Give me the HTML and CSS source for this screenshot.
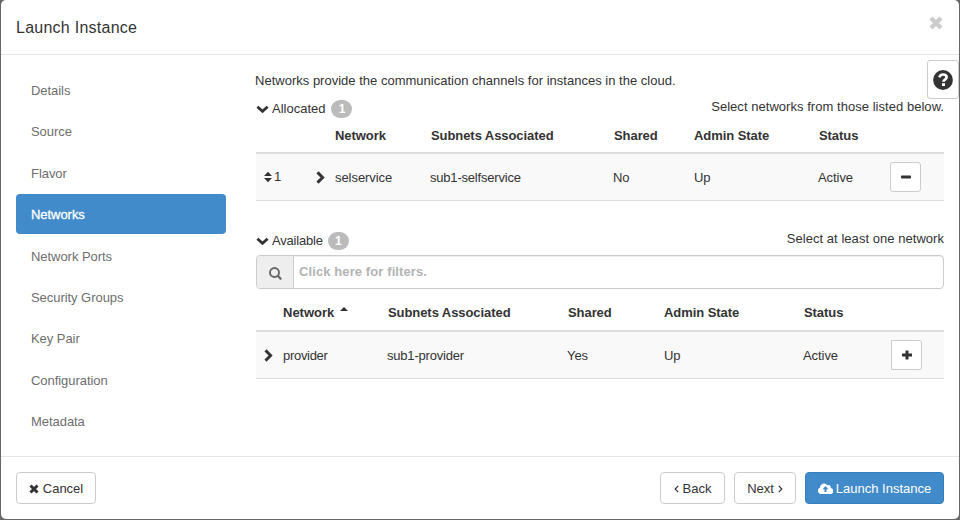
FILE: index.html
```html
<!DOCTYPE html>
<html lang="en">
<head>
<meta charset="utf-8">
<title>Launch Instance</title>
<link rel="stylesheet" href="styles.css">
</head>
<body>
<div class="modal">
  <header class="modal-header">
    <h1>Launch Instance</h1>
    <button class="close" aria-label="Close"><svg width="14" height="14" viewBox="0 0 14 14"><path d="M2 2 12 12M12 2 2 12" stroke="currentColor" stroke-width="4.4"/></svg></button>
  </header>
  <div class="modal-body">
    <nav class="steps">
      <a>Details</a><a>Source</a><a>Flavor</a><a class="active">Networks</a><a>Network Ports</a><a>Security Groups</a><a>Key Pair</a><a>Configuration</a><a>Metadata</a>
    </nav>
    <main class="content">
      <p class="intro">Networks provide the communication channels for instances in the cloud.</p>
      <section class="allocated">
        <div class="bar">
          <div class="label"><svg width="13" height="9" viewBox="0 0 13 9"><path d="M1.4 1.8 6.5 6.4 11.6 1.8" fill="none" stroke="currentColor" stroke-width="2.8"/></svg><span>Allocated</span><b class="badge">1</b></div>
          <span class="hint">Select networks from those listed below.</span>
        </div>
        <div class="row head"><span></span><span></span><span>Network</span><span>Subnets Associated</span><span>Shared</span><span>Admin State</span><span>Status</span><span></span></div>
        <div class="row item">
          <span class="order"><svg width="8" height="12" viewBox="0 0 8 12"><path d="M0 5 4 .8 8 5zM0 7H8L4 11.2z" fill="currentColor"/></svg>1</span>
          <svg width="9" height="13" viewBox="0 0 9 13"><path d="M1.5 1.4 6.6 6.5 1.5 11.6" fill="none" stroke="currentColor" stroke-width="2.9"/></svg>
          <span>selservice</span><span class="subnet">sub1-selfservice</span><span class="value">No</span><span>Up</span><span class="value">Active</span>
          <button class="square" aria-label="Remove"><svg width="10" height="10" viewBox="0 0 10 10"><rect y="3.5" width="10" height="3" rx=".7" fill="currentColor"/></svg></button>
        </div>
      </section>
      <section class="available">
        <div class="bar">
          <div class="label"><svg width="13" height="9" viewBox="0 0 13 9"><path d="M1.4 1.8 6.5 6.4 11.6 1.8" fill="none" stroke="currentColor" stroke-width="2.8"/></svg><span>Available</span><b class="badge">1</b></div>
          <span class="hint">Select at least one network</span>
        </div>
        <div class="search">
          <span class="addon"><svg width="13" height="13" viewBox="0 0 13 13"><circle cx="5.5" cy="5.5" r="4.5" fill="none" stroke="currentColor" stroke-width="1.9"/><path d="M8.6 8.6 12.3 12.3" stroke="currentColor" stroke-width="2.2"/></svg></span>
          <span class="placeholder">Click here for filters.</span>
        </div>
        <div class="row head"><span></span><span class="sorted">Network<svg width="8" height="4" viewBox="0 0 8 4"><path d="M0 4 4 0 8 4z" fill="currentColor"/></svg></span><span>Subnets Associated</span><span>Shared</span><span>Admin State</span><span>Status</span><span></span></div>
        <div class="row item">
          <svg width="9" height="13" viewBox="0 0 9 13"><path d="M1.5 1.4 6.6 6.5 1.5 11.6" fill="none" stroke="currentColor" stroke-width="2.9"/></svg>
          <span class="name">provider</span><span class="subnet">sub1-provider</span><span class="value">Yes</span><span>Up</span><span class="value">Active</span>
          <button class="square joined" aria-label="Add"><svg width="10" height="10" viewBox="0 0 10 10"><path d="M0 3.5H3.5V.5H6.5V3.5H10V6.5H6.5V9.5H3.5V6.5H0z" fill="currentColor"/></svg></button>
        </div>
      </section>
    </main>
  </div>
  <footer class="modal-footer">
    <button class="btn cancel"><svg width="10" height="10" viewBox="0 0 10 10"><path d="M1.5 1.5 8.5 8.5M8.5 1.5 1.5 8.5" stroke="currentColor" stroke-width="3"/></svg><span>Cancel</span></button>
    <button class="btn back"><svg width="5" height="8" viewBox="0 0 5 8"><path d="M4.2 .8 1.2 4 4.2 7.2" fill="none" stroke="currentColor" stroke-width="1.2"/></svg><span>Back</span></button>
    <button class="btn next"><span>Next</span><svg width="5" height="8" viewBox="0 0 5 8"><path d="M.8 .8 3.8 4 .8 7.2" fill="none" stroke="currentColor" stroke-width="1.2"/></svg></button>
    <button class="btn primary"><svg width="15" height="11" viewBox="0 0 15 11"><path fill="currentColor" fill-rule="evenodd" d="M3.3 11A3.2 3.2 0 0 1 2 4.8 4.1 4.1 0 0 1 9.4 2.2 2.3 2.3 0 0 1 12.6 5 3 3 0 0 1 11.9 11zM7.5 3.1 4.5 6.2H6.5V9H8.5V6.2H10.5z"/></svg><span>Launch Instance</span></button>
  </footer>
  <button class="help" aria-label="Help"><svg width="20" height="20" viewBox="0 0 20 20"><circle cx="10" cy="10" r="9.9" fill="currentColor"/><path d="M6.4 7.4C6.9 5.2 8.2 4.5 10 4.5c2.2 0 3.6 1.1 3.6 2.8 0 2.4-3 2.3-3.1 4.5" fill="none" stroke="#fff" stroke-width="2.7"/><rect x="9" y="13.2" width="3" height="2.8" fill="#fff"/></svg></button>
</div>
</body>
</html>
```
FILE: styles.css
```css
* { box-sizing: border-box; }
body {
  margin: 0;
  height: 520px;
  padding: 0 1px 1px;
  background: #666;
  color: #333;
  font: 13px/18px "Liberation Sans", Arial, sans-serif;
  overflow: hidden;
}
button { font: inherit; letter-spacing: inherit; color: inherit; padding: 0; }
svg { display: block; flex: none; }
.modal {
  position: relative;
  display: flex;
  flex-direction: column;
  height: 519px;
  background: #fff;
  border-radius: 5px;
}
.modal-header {
  height: 55px;
  flex: none;
  display: flex;
  justify-content: space-between;
  align-items: flex-start;
  padding: 16px 16px 0 15px;
  border-bottom: 1px solid #e5e5e5;
}
h1 { margin: 0; font-size: 16px; line-height: 23px; font-weight: 400; letter-spacing: .25px; }
.close { border: 0; background: none; color: #ccc; }
.modal-body { flex: 1; display: flex; min-height: 0; }
.steps { width: 239px; padding: 15px 14px 0 15px; display: flex; flex-direction: column; gap: 2px; flex: none; }
.steps a { height: 39.4px; line-height: 39.2px; padding: 1px 0 0 15px; border-radius: 4px; color: #6e6e6e; flex: none; letter-spacing: -.05px; }
.steps .active { background: #428bca; color: #fff; -webkit-text-stroke: .3px #fff; }
.content { width: 704px; padding: 17px 0 0 16px; }
.intro { margin: 0 0 0 -1px; letter-spacing: .01px; }
.bar { display: flex; justify-content: space-between; }
.label { display: flex; align-items: center; height: 18px; }
.label span { margin-left: 3px; }
.badge {
  width: 21px;
  height: 18px;
  margin-left: 5px;
  border-radius: 9px;
  background: #bbb;
  color: #fff;
  font-size: 12px;
  text-align: center;
}
.allocated .badge { margin-left: 6px; }
.available .label span { letter-spacing: -.2px; }
.allocated .bar { height: 26px; padding-top: 10px; }
.hint { margin-top: -2px; letter-spacing: .04px; }
.available { padding-top: 31px; }
.row { display: grid; align-items: center; }
.allocated .row { grid-template-columns: 59px 20px 96px 183px 80px 125px 71px 1fr; }
.available .row { grid-template-columns: 27px 105px 180px 96px 140px 87px 1fr; }
.head { border-bottom: 2px solid #ddd; font-weight: 700; letter-spacing: -.07px; }
.allocated .head { height: 38px; padding-top: 4px; }
.available .head { height: 43px; padding-top: 6px; }
.item { height: 47px; background: #f9f9f9; border-bottom: 1px solid #ddd; letter-spacing: -.06px; }
.item > span { padding-top: 1px; }
.item .name { letter-spacing: -.3px; }
.item .subnet { margin-left: -1px; letter-spacing: -.2px; }
.item .value { margin-left: -1px; }
.item .order { display: flex; align-items: center; gap: 2px; padding: 0 0 0 8px; }
.item > svg { margin-left: 1px; }
.available .item > svg { margin-left: 8px; }
.square {
  width: 31px;
  height: 30px;
  display: grid;
  place-items: center;
  border: 1px solid #ccc;
  border-radius: 3px;
  background: #fff;
}
.joined { border-radius: 0 3px 3px 0; }
.search {
  height: 34px;
  margin-top: 5px;
  display: flex;
  align-items: center;
  border: 1px solid #ccc;
  border-radius: 4px;
  box-shadow: inset 0 1px 1px rgba(0, 0, 0, .075);
}
.addon { width: 37px; height: 32px; padding-top: 2px; display: grid; place-items: center; background: #eee; border-right: 1px solid #ccc; border-radius: 3px 0 0 3px; color: #666; }
.placeholder { padding-left: 5px; color: #b3b3b3; font-weight: 700; letter-spacing: .1px; }
.sorted { display: flex; align-items: center; gap: 6px; letter-spacing: 0; }
.sorted svg { margin-top: -8px; }
.modal-footer {
  height: 63px;
  flex: none;
  display: flex;
  align-items: flex-start;
  gap: 9px;
  padding: 15px 15px 0;
  border-top: 1px solid #e5e5e5;
}
.btn { height: 32px; padding-top: 1px; display: flex; align-items: center; justify-content: center; gap: 4px; border: 1px solid #ccc; border-radius: 4px; background: #fff; }
.cancel { width: 80px; margin-right: auto; }
.back { width: 65px; }
.next { width: 62px; }
.primary { width: 139px; gap: 3px; background: #428bca; border-color: #357ebd; color: #fff; }
.help {
  position: absolute;
  top: 60px;
  right: 0;
  width: 32px;
  height: 39px;
  display: grid;
  place-items: center;
  border: 1px solid #ccc;
  border-radius: 3px;
  background: #fff;
}
```
